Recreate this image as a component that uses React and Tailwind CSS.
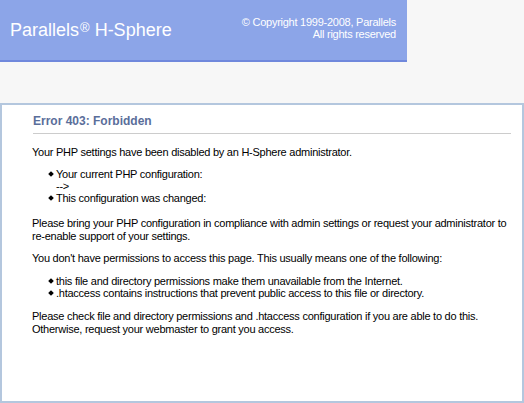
import React from 'react';

const body = "font-['Liberation_Sans',Arial,sans-serif] text-[11px] tracking-[-0.25px] text-black";

function Bullets({ items, className }) {
  return (
    <ul className={`pl-[16px] ${className}`}>
      {items.map((item, i) => (
        <li key={i} className="flex leading-[12px]">
          <span className="w-[8px] shrink-0 flex items-center pl-[1px]">
            {item.bullet !== false && <span className="block w-[4px] h-[4px] bg-black rotate-45" />}
          </span>
          <span>{item.text}</span>
        </li>
      ))}
    </ul>
  );
}

export default function App() {
  return (
    <div className={`min-h-[403px] bg-[#f7f7f7] ${body}`}>
      <div className="w-[407px] h-[62px] bg-[#8ca5e8] border-b-2 border-[#7088dc] flex items-start justify-between pl-[10px] pr-[11px]">
        <div className="text-white text-[18px] tracking-normal mt-[20px] leading-[21px]">
          Parallels<sup className="text-[13px] relative -top-[4px] ml-[1px]">®</sup> H-Sphere
        </div>
        <div className="text-white text-[11px] text-right leading-[12px] mt-[16px]">
          <div>© Copyright 1999-2008, Parallels</div>
          <div>All rights reserved</div>
        </div>
      </div>
      <div className="mt-[41px] h-[300px] bg-white border-2 border-[#b4c7de] pl-[30px] pr-[10px] pt-[9px]">
        <div className="mx-[1px] pb-[5px] border-b border-[#cccccc] text-[#5a6e9a] font-bold text-[12px] tracking-normal leading-[14px]">
          Error 403: Forbidden
        </div>
        <p className="mt-[12px] leading-[13px]">
          Your PHP settings have been disabled by an H-Sphere administrator.
        </p>
        <Bullets
          className="mt-[9px] mb-[13px]"
          items={[
            { text: 'Your current PHP configuration:' },
            { text: '-->', bullet: false },
            { text: 'This configuration was changed:' },
          ]}
        />
        <p className="leading-[13px]">
          Please bring your PHP configuration in compliance with admin settings or request your administrator to
          re-enable support of your settings.
        </p>
        <p className="mt-[9px] leading-[13px]">
          You don't have permissions to access this page. This usually means one of the following:
        </p>
        <Bullets
          className="mt-[10px] mb-[11px]"
          items={[
            { text: 'this file and directory permissions make them unavailable from the Internet.' },
            { text: '.htaccess contains instructions that prevent public access to this file or directory.' },
          ]}
        />
        <p className="leading-[13px]">
          Please check file and directory permissions and .htaccess configuration if you are able to do this.
          <br />
          Otherwise, request your webmaster to grant you access.
        </p>
      </div>
    </div>
  );
}
